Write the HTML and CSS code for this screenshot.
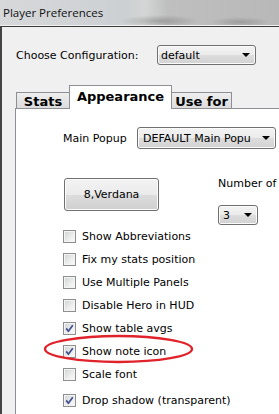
FILE: index.html
```html
<!DOCTYPE html>
<html>

<head>
	<link rel="stylesheet" href="styles.css">
</head>

<body>
	<div class="titlebar">
		<span class="title">Player Preferences</span>
	</div>

	<div class="window">
		<div class="config-row">
			<label class="config-label">Choose Configuration:</label>
			<div class="combo combo-config"><span>default</span><i class="arrow"></i></div>
		</div>

		<div class="tabs">
			<div class="tab tab-stats">Stats</div>
			<div class="tab tab-appearance active">Appearance</div>
			<div class="tab tab-use">Use for</div>
		</div>

		<div class="panel">
			<div class="popup-row">
				<span class="popup-label">Main Popup</span>
				<div class="combo combo-popup"><span>DEFAULT Main Popu</span><i class="arrow"></i></div>
			</div>

			<div class="font-row">
				<button class="font-btn">8,Verdana</button>
				<div class="number-col">
					<span class="number-label">Number of</span>
					<div class="combo combo-num"><span>3</span><i class="arrow"></i></div>
				</div>
			</div>

			<ul class="checks">
				<li><span class="box"></span>Show Abbreviations</li>
				<li><span class="box"></span>Fix my stats position</li>
				<li><span class="box"></span>Use Multiple Panels</li>
				<li><span class="box"></span>Disable Hero in HUD</li>
				<li><span class="box checked"><svg viewBox="0 0 11 11" width="11" height="11"><path d="M2.2 5.4 L4.4 8.2 L8.8 2.2" /></svg></span>Show table avgs</li>
				<li class="marked">
					<span class="box checked"><svg viewBox="0 0 11 11" width="11" height="11"><path d="M2.2 5.4 L4.4 8.2 L8.8 2.2" /></svg></span>Show note icon
					<svg class="ring" width="151" height="30" viewBox="0 0 151 30"><ellipse cx="75.5" cy="15" rx="73.5" ry="13" /></svg>
				</li>
				<li><span class="box"></span>Scale font</li>
				<li class="last"><span class="box checked"><svg viewBox="0 0 11 11" width="11" height="11"><path d="M2.2 5.4 L4.4 8.2 L8.8 2.2" /></svg></span>Drop shadow (transparent)</li>
			</ul>
		</div>
	</div>
</body>

</html>
```

FILE: styles.css
```css
body {
	margin: 0;
	padding: 0;
	width: 279px;
	height: 414px;
	overflow: hidden;
	background: #f0f0f0;
	font-family: "DejaVu Sans", Verdana, sans-serif;
	font-size: 11px;
	color: #000;
}

.titlebar {
	height: 25px;
	border-bottom: 1px solid #f2f2f2;
	background:
		radial-gradient(ellipse 40px 6px at 160px 21px, rgba(90, 90, 90, 0.35), transparent),
		radial-gradient(ellipse 30px 5px at 240px 22px, rgba(90, 90, 90, 0.3), transparent),
		linear-gradient(90deg, #d6d8da 0%, #cdd0d2 45%, #d4d6d6 52%, #bfbfbf 60%, #b8b8b8 100%);
}

.title {
	display: block;
	padding-left: 3px;
	line-height: 25px;
	font-family: "Open Sans", "Noto Sans", sans-serif;
	font-size: 11.5px;
	color: #111;
}

.window {
	border-top: 1px solid #3a3a3a;
	border-left: 2px solid #444;
	padding: 18px 0 0 13px;
	height: 388px;
}

.config-row {
	display: flex;
	align-items: center;
	padding-left: 1px;
}

.config-label {
	width: 141px;
}

.combo {
	position: relative;
	box-sizing: border-box;
	height: 20px;
	border: 1px solid #707070;
	border-radius: 3px;
	background: linear-gradient(#f3f3f3 0%, #ebebeb 50%, #dddddd 51%, #d2d2d2 100%);
	box-shadow: inset 0 0 0 1px #fbfbfb;
	display: flex;
	align-items: center;
	overflow: hidden;
	white-space: nowrap;
}

.combo span {
	padding-left: 3px;
}

.combo .arrow {
	position: absolute;
	right: 5px;
	top: 7px;
	width: 0;
	height: 0;
	border-left: 4px solid transparent;
	border-right: 4px solid transparent;
	border-top: 4px solid #000;
}

.combo-config {
	width: 99px;
}

.tabs {
	display: flex;
	align-items: flex-end;
	margin-top: 20px;
	margin-left: 1px;
	position: relative;
	z-index: 2;
}

.tab {
	box-sizing: border-box;
	height: 16px;
	margin-right: -1px;
	border: 1px solid #8d8f95;
	border-bottom: none;
	background: linear-gradient(#eeeeee, #dcdcdc);
	font-weight: bold;
	font-size: 13px;
	display: flex;
	justify-content: center;
	align-items: center;
	padding-top: 1px;
}

.tab-stats {
	width: 54px;
}

.tab-appearance {
	width: 103px;
}

.tab-use {
	width: 61px;
}

.tab.active {
	height: 24px;
	margin-bottom: -1px;
	background: #fff;
	position: relative;
	z-index: 3;
	padding-top: 0;
	padding-bottom: 2px;
}

.panel {
	position: relative;
	z-index: 1;
	border-top: 1px solid #8d8f95;
	border-left: 1px solid #8d8f95;
	background: #fff;
	height: 320px;
	padding: 18px 0 0 47px;
	box-sizing: border-box;
}

.popup-row {
	display: flex;
	align-items: center;
}

.popup-label {
	width: 74px;
}

.combo-popup {
	width: 139px;
	height: 22px;
}

.combo-popup span {
	padding-left: 5px;
}

.combo-popup .arrow {
	top: 8px;
}

.font-row {
	display: flex;
	align-items: flex-start;
	margin-top: 29px;
	margin-left: 1px;
}

.font-btn {
	box-sizing: border-box;
	width: 95px;
	height: 33px;
	border: 1px solid #707070;
	border-radius: 3px;
	background: linear-gradient(#f3f3f3 0%, #ebebeb 50%, #dddddd 51%, #cfcfcf 100%);
	box-shadow: inset 0 0 0 1px #fcfcfc;
	font-family: "DejaVu Sans", Verdana, sans-serif;
	font-size: 11px;
	color: #000;
	padding: 0;
}

.number-col {
	display: flex;
	flex-direction: column;
	margin-left: 59px;
	margin-top: -1px;
	white-space: nowrap;
}

.number-label {
	line-height: 13px;
}

.combo-num {
	width: 40px;
	margin-top: 15px;
}

.combo-num span {
	padding-left: 4px;
}

.checks {
	list-style: none;
	margin: 0;
	padding: 0;
}

.checks li {
	position: relative;
	display: flex;
	align-items: center;
	height: 23px;
	white-space: nowrap;
}

.checks li.last {
	margin-top: 3px;
}

.box {
	box-sizing: border-box;
	width: 13px;
	height: 13px;
	margin-right: 6px;
	border: 1px solid #8e8f8f;
	background: linear-gradient(135deg, #cfd1d4 0%, #eeeeee 60%, #fafafa 100%);
	box-shadow: inset 0 0 0 1px #f4f4f4;
	display: flex;
}

.box svg {
	fill: none;
	stroke: #3d4f8e;
	stroke-width: 1.7;
}

.ring {
	position: absolute;
	left: -20px;
	top: -6px;
	overflow: visible;
}

.ring ellipse {
	fill: none;
	stroke: #e0232b;
	stroke-width: 2.4;
}
```
